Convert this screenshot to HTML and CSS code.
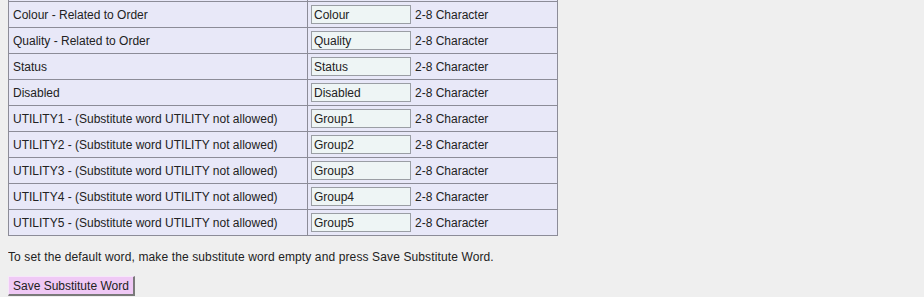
FILE: index.html
```html
<!DOCTYPE html>
<html>
<head>
<meta charset="utf-8">
<link rel="stylesheet" href="styles.css">
</head>
<body>
<table class="subs">
  <tr class="prev"><td class="lbl"></td><td class="val"></td></tr>
  <tr><td class="lbl">Colour - Related to Order</td><td class="val"><div class="field"><input class="word" type="text" value="Colour"><span class="hint">2-8 Character</span></div></td></tr>
  <tr><td class="lbl">Quality - Related to Order</td><td class="val"><div class="field"><input class="word" type="text" value="Quality"><span class="hint">2-8 Character</span></div></td></tr>
  <tr><td class="lbl">Status</td><td class="val"><div class="field"><input class="word" type="text" value="Status"><span class="hint">2-8 Character</span></div></td></tr>
  <tr><td class="lbl">Disabled</td><td class="val"><div class="field"><input class="word" type="text" value="Disabled"><span class="hint">2-8 Character</span></div></td></tr>
  <tr><td class="lbl">UTILITY1 - (Substitute word UTILITY not allowed)</td><td class="val"><div class="field"><input class="word" type="text" value="Group1"><span class="hint">2-8 Character</span></div></td></tr>
  <tr><td class="lbl">UTILITY2 - (Substitute word UTILITY not allowed)</td><td class="val"><div class="field"><input class="word" type="text" value="Group2"><span class="hint">2-8 Character</span></div></td></tr>
  <tr><td class="lbl">UTILITY3 - (Substitute word UTILITY not allowed)</td><td class="val"><div class="field"><input class="word" type="text" value="Group3"><span class="hint">2-8 Character</span></div></td></tr>
  <tr><td class="lbl">UTILITY4 - (Substitute word UTILITY not allowed)</td><td class="val"><div class="field"><input class="word" type="text" value="Group4"><span class="hint">2-8 Character</span></div></td></tr>
  <tr><td class="lbl">UTILITY5 - (Substitute word UTILITY not allowed)</td><td class="val"><div class="field"><input class="word" type="text" value="Group5"><span class="hint">2-8 Character</span></div></td></tr>
</table>
<p class="note">To set the default word, make the substitute word empty and press Save Substitute Word.</p>
<button class="save" type="button">Save Substitute Word</button>
</body>
</html>
```
FILE: styles.css
```css
html, body {
  background: #efefef;
}
body {
  margin: 0 8px;
  font-family: "Liberation Sans", Arial, sans-serif;
  font-size: 12px;
  color: #222;
}
.subs {
  border-collapse: collapse;
  background: #e8e8f8;
  margin-top: -25px;
}
.subs td {
  border: 1px solid #8c8c98;
  height: 26px;
  padding: 0 3px;
  box-sizing: border-box;
  vertical-align: middle;
  white-space: nowrap;
}
.subs td.lbl {
  width: 299px;
  padding-left: 4px;
}
.subs td.val {
  width: 250px;
}
.field {
  display: flex;
  align-items: center;
  gap: 4px;
}
.hint {
  line-height: 14px;
  padding-top: 1px;
}
.word {
  box-sizing: border-box;
  width: 100px;
  height: 19px;
  margin: 0;
  padding: 1px 2px;
  border: 1px solid #9a9ea4;
  background: #eef5f5;
  font-family: "Liberation Sans", Arial, sans-serif;
  font-size: 12px;
  color: #222;
}
.note {
  margin: 14px 0 12px;
  line-height: 14px;
  letter-spacing: 0.12px;
}
.save {
  box-sizing: border-box;
  height: 20px;
  padding: 0 4px;
  margin: 0;
  font-family: "Liberation Sans", Arial, sans-serif;
  font-size: 12px;
  color: #222;
  background: #efc9f5;
  border: 1px solid;
  border-color: #f7e6fa #7a7a7a #7a7a7a #f7e6fa;
  border-width: 1px 2px 2px 1px;
}
```
